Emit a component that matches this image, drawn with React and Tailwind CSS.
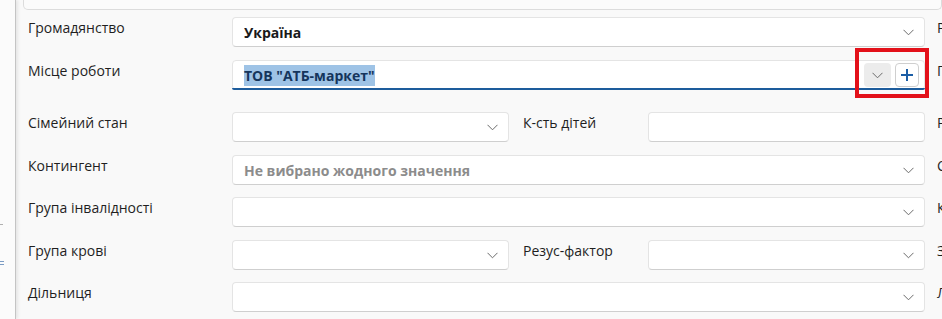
import React from "react";

const Chevron = () => (
  <svg width="11" height="7" viewBox="0 0 11 7" fill="none">
    <path d="M0.5 0.8 L5.5 5.8 L10.5 0.8" stroke="#6b6b6b" strokeWidth="1" />
  </svg>
);

function Field({ children, chevron, className = "" }) {
  return (
    <div
      className={
        "h-[30px] bg-white border border-[#e4e4e4] border-b-[#cfcfcf] rounded-[4px] flex items-center pl-[11px] pr-[10px] " +
        className
      }
    >
      <div className="flex-1 min-w-0 truncate">{children}</div>
      {chevron && <Chevron />}
    </div>
  );
}

function Row({ label, right, children, className = "" }) {
  return (
    <div className={"flex items-start " + className}>
      <div className="w-[204px] shrink-0 leading-[21px] text-[#1f1f1f]">{label}</div>
      <div className="w-[693px] shrink-0">{children}</div>
      <div className="ml-[12px] leading-[21px] whitespace-nowrap text-[#1f1f1f]">{right}</div>
    </div>
  );
}

function Split({ left, label, right }) {
  return (
    <div className="flex items-start">
      <div className="w-[277px] shrink-0">{left}</div>
      <div className="w-[139px] shrink-0 pl-[14px] leading-[21px] text-[#1f1f1f]">{label}</div>
      <div className="w-[277px] shrink-0">{right}</div>
    </div>
  );
}

export default function App() {
  return (
    <div
      className="w-[942px] h-[319px] overflow-hidden flex bg-[#f9f9f9] text-[14px]"
      style={{ fontFamily: '"Open Sans", "Noto Sans", sans-serif' }}
    >
      {/* left strip */}
      <div className="relative w-[16px] shrink-0 bg-[#fbfbfb] border-r border-[#c4c4c4] shadow-[2px_0_3px_rgba(0,0,0,0.08)]">
        <div className="absolute left-0 top-[224px] w-[3px] h-px bg-[#b0b0b0]" />
        <div className="absolute left-0 top-[261px] w-[4px] h-[4px] border-y border-[#7b9cc4]" />
      </div>

      <div className="relative flex-1 min-w-0 pl-[7px]">
        <div className="h-[10px] border border-t-0 border-[#dcdcdc] rounded-b-[5px] bg-[#fbfbfb]" />

        <div className="pl-[5px] pt-[7px]">
          <Row label="Громадянство" right="Регіон">
            <Field chevron>
              <span className="font-bold text-[#1a1a1a]">Україна</span>
            </Field>
          </Row>

          <Row label="Місце роботи" right="Посада" className="mt-[13px]">
            <div className="relative h-[30px] bg-white border border-[#e4e4e4] rounded-[4px] flex items-center pl-[11px] pr-[5px]">
              <div className="flex-1 min-w-0">
                <span className="font-bold text-[#15355c] bg-[#9ec3e6] py-[1px]">ТОВ "АТБ-маркет"</span>
              </div>
              <div className="w-[27px] h-[24px] rounded-[4px] bg-[#ececec] flex items-center justify-center">
                <Chevron />
              </div>
              <div className="ml-[4px] w-[24px] h-[24px] rounded-[4px] bg-white border border-[#cfcfcf] flex items-center justify-center">
                <svg width="14" height="14" viewBox="0 0 14 14">
                  <path d="M7 1v12M1 7h12" stroke="#1c5ea6" strokeWidth="2" />
                </svg>
              </div>
              <div className="absolute left-[-1px] right-[-1px] bottom-[-1px] h-[2px] bg-[#1d5c9c] rounded-b-[4px]" />
            </div>
          </Row>

          <Row label="Сімейний стан" right="Рівень освіти" className="mt-[22px]">
            <Split
              left={<Field chevron />}
              label="К-сть дітей"
              right={<Field />}
            />
          </Row>

          <Row label="Контингент" right="Соціальний статус" className="mt-[13px]">
            <Field chevron>
              <span className="font-bold text-[#8c8c8c]">Не вибрано жодного значення</span>
            </Field>
          </Row>

          <Row label="Група інвалідності" right="Категорія" className="mt-[12px]">
            <Field chevron />
          </Row>

          <Row label="Група крові" right="Згода" className="mt-[13px]">
            <Split
              left={<Field chevron />}
              label="Резус-фактор"
              right={<Field chevron />}
            />
          </Row>

          <Row label="Дільниця" right="Лікар" className="mt-[12px]">
            <Field chevron />
          </Row>
        </div>

        {/* highlight frame */}
        <div className="absolute left-[839px] top-[48px] w-[74px] h-[50px] border-4 border-[#e3111a]" />
      </div>
    </div>
  );
}
